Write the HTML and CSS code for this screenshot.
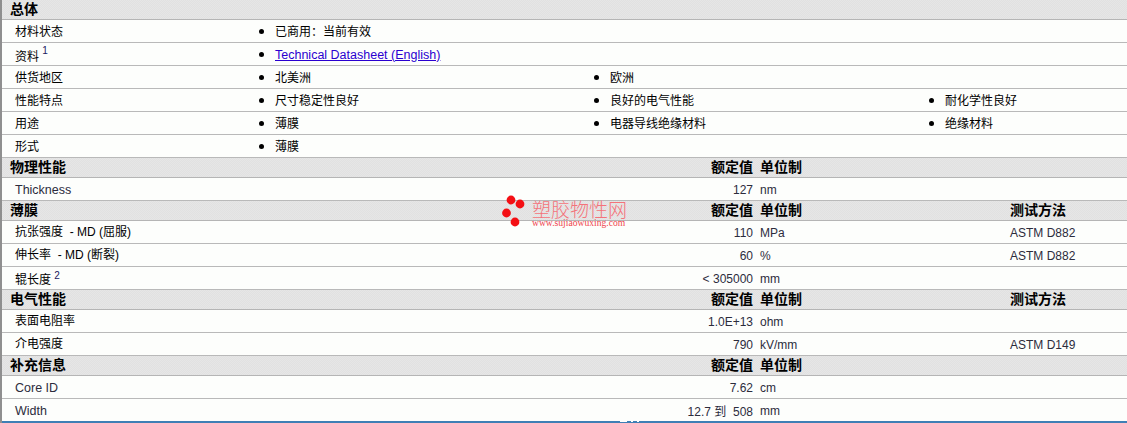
FILE: index.html
```html
<!DOCTYPE html>
<html lang="zh">
<head>
<meta charset="utf-8">
<title>塑胶物性</title>
<link rel="stylesheet" href="styles.css">
</head>
<body>
<main class="sheet">
  <div class="head"><b class="title">总体</b></div>
  <div class="row"><span class="label">材料状态</span><ul class="items"><li>已商用<span class="colon">：</span>当前有效</li></ul></div>
  <div class="row"><span class="label raised">资料 <sup>1</sup></span><ul class="items"><li class="link"><a href="#">Technical Datasheet (English)</a></li></ul></div>
  <div class="row"><span class="label">供货地区</span><ul class="items"><li>北美洲</li><li>欧洲</li></ul></div>
  <div class="row"><span class="label">性能特点</span><ul class="items"><li>尺寸稳定性良好</li><li>良好的电气性能</li><li>耐化学性良好</li></ul></div>
  <div class="row"><span class="label">用途</span><ul class="items"><li>薄膜</li><li>电器导线绝缘材料</li><li>绝缘材料</li></ul></div>
  <div class="row"><span class="label">形式</span><ul class="items"><li>薄膜</li></ul></div>

  <div class="head cols"><b class="title">物理性能</b><b class="val">额定值</b><b class="unit">单位制</b><b class="test"></b></div>
  <div class="row cols"><span class="label latin">Thickness</span><span class="val">127</span><span class="unit">nm</span><span class="test"></span></div>

  <div class="head cols"><b class="title">薄膜</b><b class="val">额定值</b><b class="unit">单位制</b><b class="test">测试方法</b></div>
  <div class="row cols"><span class="label">抗张强度 &nbsp;- MD (屈服)</span><span class="val">110</span><span class="unit">MPa</span><span class="test">ASTM D882</span></div>
  <div class="row cols"><span class="label">伸长率 &nbsp;- MD (断裂)</span><span class="val">60</span><span class="unit">%</span><span class="test">ASTM D882</span></div>
  <div class="row cols"><span class="label raised">辊长度 <sup>2</sup></span><span class="val">&lt; 305000</span><span class="unit">mm</span><span class="test"></span></div>

  <div class="head cols"><b class="title">电气性能</b><b class="val">额定值</b><b class="unit">单位制</b><b class="test">测试方法</b></div>
  <div class="row cols"><span class="label">表面电阻率</span><span class="val">1.0E+13</span><span class="unit">ohm</span><span class="test"></span></div>
  <div class="row cols"><span class="label">介电强度</span><span class="val">790</span><span class="unit">kV/mm</span><span class="test">ASTM D149</span></div>

  <div class="head cols"><b class="title">补充信息</b><b class="val">额定值</b><b class="unit">单位制</b><b class="test"></b></div>
  <div class="row cols"><span class="label latin">Core ID</span><span class="val">7.62</span><span class="unit">cm</span><span class="test"></span></div>
  <div class="row cols"><span class="label latin">Width</span><span class="val">12.7 到 &nbsp;508</span><span class="unit">mm</span><span class="test"></span></div>
  <div class="foot"><i class="bit wide"></i><i class="bit"></i><i class="bit"></i></div>
</main>
<aside class="mark">
  <svg class="dots" width="26" height="34" viewBox="0 0 26 34" aria-hidden="true">
    <circle cx="9" cy="5" r="4.4"/><circle cx="18" cy="9" r="4.4"/><circle cx="4.5" cy="18" r="4.4"/><circle cx="13" cy="27" r="4.4"/>
  </svg>
  <div class="mark-text"><span class="mark-cn">塑胶物性网</span><span class="mark-url">www.sujiaowuxing.com</span></div>
</aside>
</body>
</html>
```
FILE: styles.css
```css
html, body { margin: 0; padding: 0; background: #fdfefc; }
body { height: 423px; overflow: hidden; position: relative; font-family: "Liberation Sans", "Noto Sans CJK SC", sans-serif; font-size: 12px; color: #000; }
.sheet { border-left: 2px solid #8f8f8f; display: flex; flex-direction: column; }

.head { height: 17px; padding-bottom: 2px; background: repeating-conic-gradient(#e1e1e1 0 25%, #e6e6e6 0 50%) 0 0 / 2px 2px; border-bottom: 1px solid #b5b5b5; display: flex; align-items: center; font-size: 14px; line-height: 17px; }
.row { height: 22px; border-bottom: 1px solid #b9b9b9; display: flex; align-items: center; }
.head.cols, .row.cols { display: grid; grid-template-columns: 598px 153px 257px 1fr; align-items: center; }

.title { padding-left: 8px; padding-top: 1px; }
.label { padding-left: 13px; padding-bottom: 2px; width: 245px; flex: none; white-space: nowrap; }
.row.cols .label { width: auto; padding-bottom: 3px; }
.row .label.raised { padding-bottom: 0; padding-top: 2px; }
.row.cols .label.raised { padding-top: 0; }
.row.cols .label.latin { padding-bottom: 0; padding-top: 1px; font-size: 12.5px; color: #2c2c3c; }

.val { text-align: right; white-space: nowrap; }
.unit { padding-left: 7px; white-space: nowrap; }
.test { white-space: nowrap; }
.row.cols .val, .row.cols .unit, .row.cols .test { color: #2c2c3c; padding-top: 1px; }

sup { font-size: 10px; line-height: 0; vertical-align: 5px; color: #202060; }
.row:not(.cols) sup { vertical-align: 7px; }

.items { list-style: none; margin: 0; padding: 0; display: grid; grid-template-columns: 335px 335px 1fr; flex: 1; }
.items li { padding-left: 15px; padding-bottom: 2px; position: relative; white-space: nowrap; }
.items li.link { padding-bottom: 0; padding-top: 1px; font-size: 12.5px; }
.items li::before { content: ""; position: absolute; left: -1px; top: 50%; margin-top: -2px; width: 5px; height: 5px; border-radius: 50%; background: #000; }
.colon { font-family: "Noto Sans CJK TC", sans-serif; }
a { color: #2a00d0; }

.foot { height: 2px; margin-top: -1px; background: #3f7fb5; display: flex; gap: 4px; padding-left: 618px; overflow: hidden; }
.bit { width: 2px; height: 1px; background: #fff; }
.bit.wide { width: 7px; }

.mark { position: absolute; left: 502px; top: 195px; display: flex; gap: 4px; }
.dots { fill: #f40f14; flex: none; }
.mark-text { display: flex; flex-direction: column; padding-top: 5px; }
.mark-cn { font-family: "Noto Sans CJK SC", sans-serif; font-size: 19px; line-height: 17px; margin-bottom: 1px; color: #f4737a; font-weight: 300; white-space: nowrap; }
.mark-url { font-family: "Liberation Serif", serif; font-size: 9.6px; line-height: 10px; color: #f0444c; white-space: nowrap; }
```
